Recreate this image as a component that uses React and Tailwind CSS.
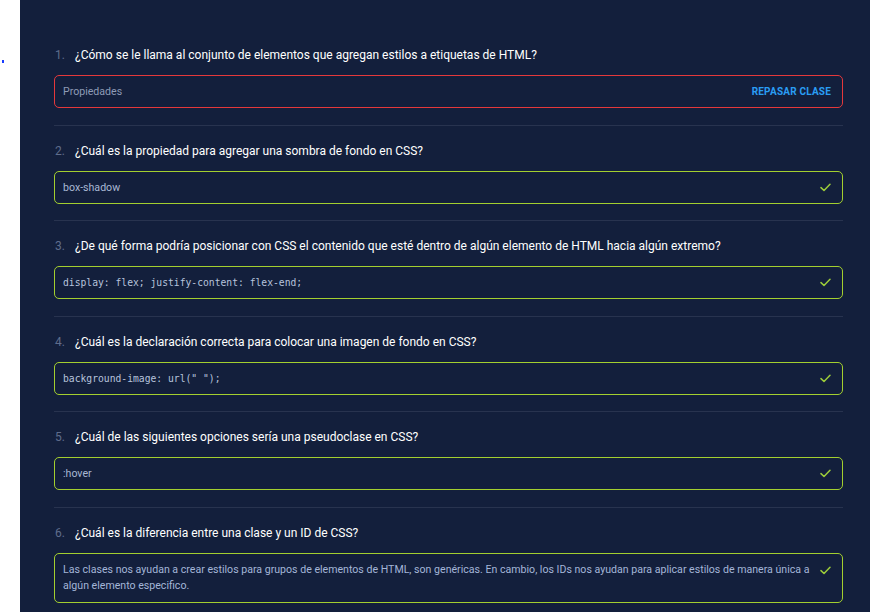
import React from "react";

const items = [
  { q: "¿Cómo se le llama al conjunto de elementos que agregan estilos a etiquetas de HTML?", a: "Propiedades", wrong: true },
  { q: "¿Cuál es la propiedad para agregar una sombra de fondo en CSS?", a: "box-shadow" },
  { q: "¿De qué forma podría posicionar con CSS el contenido que esté dentro de algún elemento de HTML hacia algún extremo?", a: "display: flex; justify-content: flex-end;", mono: true },
  { q: "¿Cuál es la declaración correcta para colocar una imagen de fondo en CSS?", a: 'background-image: url(" ");', mono: true },
  { q: "¿Cuál de las siguientes opciones sería una pseudoclase en CSS?", a: ":hover" },
  { q: "¿Cuál es la diferencia entre una clase y un ID de CSS?", a: "Las clases nos ayudan a crear estilos para grupos de elementos de HTML, son genéricas. En cambio, los IDs nos ayudan para aplicar estilos de manera única a algún elemento especifico.", long: true },
];

function Check() {
  return (
    <svg width="11" height="9" viewBox="0 0 11 9" fill="none" className="shrink-0">
      <path d="M1 4.6 L4 7.5 L10 1.2" stroke="#9ccc3a" strokeWidth="1.5" strokeLinecap="round" strokeLinejoin="round" />
    </svg>
  );
}

export default function App() {
  return (
    <div className="flex w-full h-[612px] overflow-hidden bg-white" style={{ fontFamily: "Roboto, 'Noto Sans', sans-serif" }}>
      <div className="w-[20px] shrink-0 relative">
        <div className="absolute left-[2px] top-[60px] w-[2px] h-[3px] bg-[#1a3dff]" />
      </div>
      <div className="flex-1 flex flex-col bg-[#131f3c]">
        <div className="h-[3px] bg-[#0e1830]" />
        <div className="pl-[34px] pr-[27px] pt-[30px]">
          {items.map((it, i) => (
            <div key={i} className={`pt-[15px] pb-[16.5px] ${i < items.length - 1 ? "border-b border-[#28334f]" : ""}`}>
              <div className="flex items-center h-[20px]">
                <span className="w-[21px] pl-[1px] text-[#5f6d8c] text-[12px]">{i + 1}.</span>
                <span className="text-white font-normal text-[12px]">{it.q}</span>
              </div>
              <div
                className={`mt-[10px] rounded-[5px] border flex justify-between pl-[8px] pr-[11px] py-[8px] ${
                  it.wrong ? "border-[#e5383b]" : "border-[#a3cf2f]"
                } ${it.long ? "items-start" : "items-center"}`}
              >
                <span
                  className={
                    it.mono
                      ? "text-[9.7px] leading-[15px] text-[#b7c4dc]"
                      : it.long
                      ? "text-[10.6px] leading-[16px] text-[#a4b6d8] pr-[5px]"
                      : "text-[10.6px] leading-[15px] " + (it.wrong ? "text-[#8e9bb6]" : "text-[#a9b8d4]")
                  }
                  style={it.mono ? { fontFamily: "'DejaVu Sans Mono', monospace" } : undefined}
                >
                  {it.a}
                </span>
                {it.wrong ? (
                  <span className="text-[10px] font-bold text-[#2a9df4] tracking-[0.2px]">REPASAR CLASE</span>
                ) : (
                  <span className={it.long ? "pt-[4px]" : ""}>
                    <Check />
                  </span>
                )}
              </div>
            </div>
          ))}
        </div>
      </div>
    </div>
  );
}
